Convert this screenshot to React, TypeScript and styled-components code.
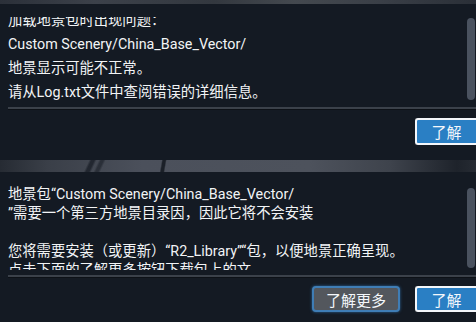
import React from "react";
import styled, { createGlobalStyle } from "styled-components";

const GlobalStyle = createGlobalStyle`
  html, body {
    margin: 0;
    padding: 0;
    background: #141a23;
  }
  body {
    width: 476px;
    height: 322px;
    overflow: hidden;
    font-family: Roboto, "Noto Sans CJK SC", sans-serif;
    color: #f2f4f6;
  }
`;

const Page = styled.div`
  display: flex;
  flex-direction: column;
  width: 476px;
  height: 322px;
  overflow: hidden;
  background: #141a23;
`;

const Dialog = styled.section<{ gapTop?: number }>`
  display: flex;
  flex-direction: column;
  margin-top: ${(p) => p.gapTop ?? 0}px;
`;

const TopStrip = styled.div`
  height: 4px;
  background: linear-gradient(
    90deg,
    #2b3039 0%,
    #3c414a 20%,
    #33383f 45%,
    #44494f 62%,
    #3a3f47 80%,
    #2a2f37 100%
  );
`;

const TitleBar = styled.div`
  height: 12px;
  background:
    linear-gradient(115deg, transparent 18.5%, #222730 19%, #222730 19.6%, transparent 20.1%),
    linear-gradient(115deg, transparent 20.5%, #2a2f38 21%, #2a2f38 21.5%, transparent 22%),
    linear-gradient(100deg, transparent 33.8%, #1b2028 34.1%, #1b2028 34.6%, transparent 34.9%),
    linear-gradient(
      90deg,
      #262b33 0%,
      #3a3f48 10%,
      #4b505b 30%,
      #4d525c 65%,
      #3e434c 82%,
      #1e232b 96%,
      #262b33 100%
    );
`;

const Body = styled.div<{ padTop: number }>`
  display: flex;
  padding: ${(p) => p.padTop}px 1px 0 8px;
`;

const Viewport = styled.div<{ h: number }>`
  flex: 1;
  height: ${(p) => p.h}px;
  overflow: hidden;
`;

const Content = styled.div<{ offset: number; lh: number }>`
  margin-top: ${(p) => -p.offset}px;
  font-size: 14.3px;
  line-height: ${(p) => p.lh}px;
  white-space: nowrap;
`;

const Line = styled.div``;

const Track = styled.div<{ h: number }>`
  width: 8px;
  height: ${(p) => p.h}px;
  margin-left: 2px;
  display: flex;
  flex-direction: column;
`;

const Thumb = styled.div<{ top: number; len: number }>`
  margin-top: ${(p) => p.top}px;
  height: ${(p) => p.len}px;
  border-radius: 4px;
  background: #4a525f;
`;

const Divider = styled.div<{ gapTop: number }>`
  margin: ${(p) => p.gapTop}px 0 0 8px;
  height: 2px;
  background: #3b414a;
  border-bottom: 1px solid #0d1117;
`;

const Footer = styled.div<{ padTop: number }>`
  display: flex;
  justify-content: flex-end;
  gap: 15px;
  padding-top: ${(p) => p.padTop}px;
`;

const PrimaryButton = styled.button<{ h: number }>`
  width: 61px;
  height: ${(p) => p.h}px;
  box-sizing: border-box;
  border: 2px solid #f4f7fb;
  border-right-width: 0;
  border-radius: 3px 0 0 3px;
  background: #2a7fc4;
  color: #f4f7fb;
  font-family: Roboto, "Noto Sans CJK SC", sans-serif;
  font-size: 15px;
  padding: 0;
`;

const SecondaryButton = styled.button`
  width: 88px;
  height: 26px;
  box-sizing: border-box;
  border: 2px solid #3f7db5;
  border-radius: 4px;
  box-shadow: 0 0 3px #2f6aa0;
  background: #53575d;
  color: #f4f7fb;
  font-family: Roboto, "Noto Sans CJK SC", sans-serif;
  font-size: 15px;
  padding: 0;
`;

const errorLines = [
  "加载地景包时出现问题：",
  "Custom Scenery/China_Base_Vector/",
  "地景显示可能不正常。",
  "请从Log.txt文件中查阅错误的详细信息。",
];

const installLines = [
  "地景包“Custom Scenery/China_Base_Vector/",
  "”需要一个第三方地景目录因，因此它将不会安装",
  "\u00a0",
  "您将需要安装（或更新）“R2_Library”“包，以便地景正确呈现。",
  "点击下面的了解更多按钮下载包上的文",
];

export default function App() {
  return (
    <Page>
      <GlobalStyle />
      <Dialog>
        <TopStrip />
        <Body padTop={13}>
          <Viewport h={87}>
            <Content offset={9} lh={24}>
              {errorLines.map((t) => (
                <Line key={t}>{t}</Line>
              ))}
            </Content>
          </Viewport>
          <Track h={84}>
            <Thumb top={1} len={82} />
          </Track>
        </Body>
        <Divider gapTop={3} />
        <Footer padTop={8}>
          <PrimaryButton h={27}>了解</PrimaryButton>
        </Footer>
      </Dialog>
      <Dialog gapTop={15}>
        <TitleBar />
        <Body padTop={13}>
          <Viewport h={85}>
            <Content offset={0} lh={19}>
              {installLines.map((t, i) => (
                <Line key={i}>{t}</Line>
              ))}
            </Content>
          </Viewport>
          <Track h={85}>
            <Thumb top={3} len={80} />
          </Track>
        </Body>
        <Divider gapTop={5} />
        <Footer padTop={8}>
          <SecondaryButton>了解更多</SecondaryButton>
          <PrimaryButton h={26}>了解</PrimaryButton>
        </Footer>
      </Dialog>
    </Page>
  );
}
